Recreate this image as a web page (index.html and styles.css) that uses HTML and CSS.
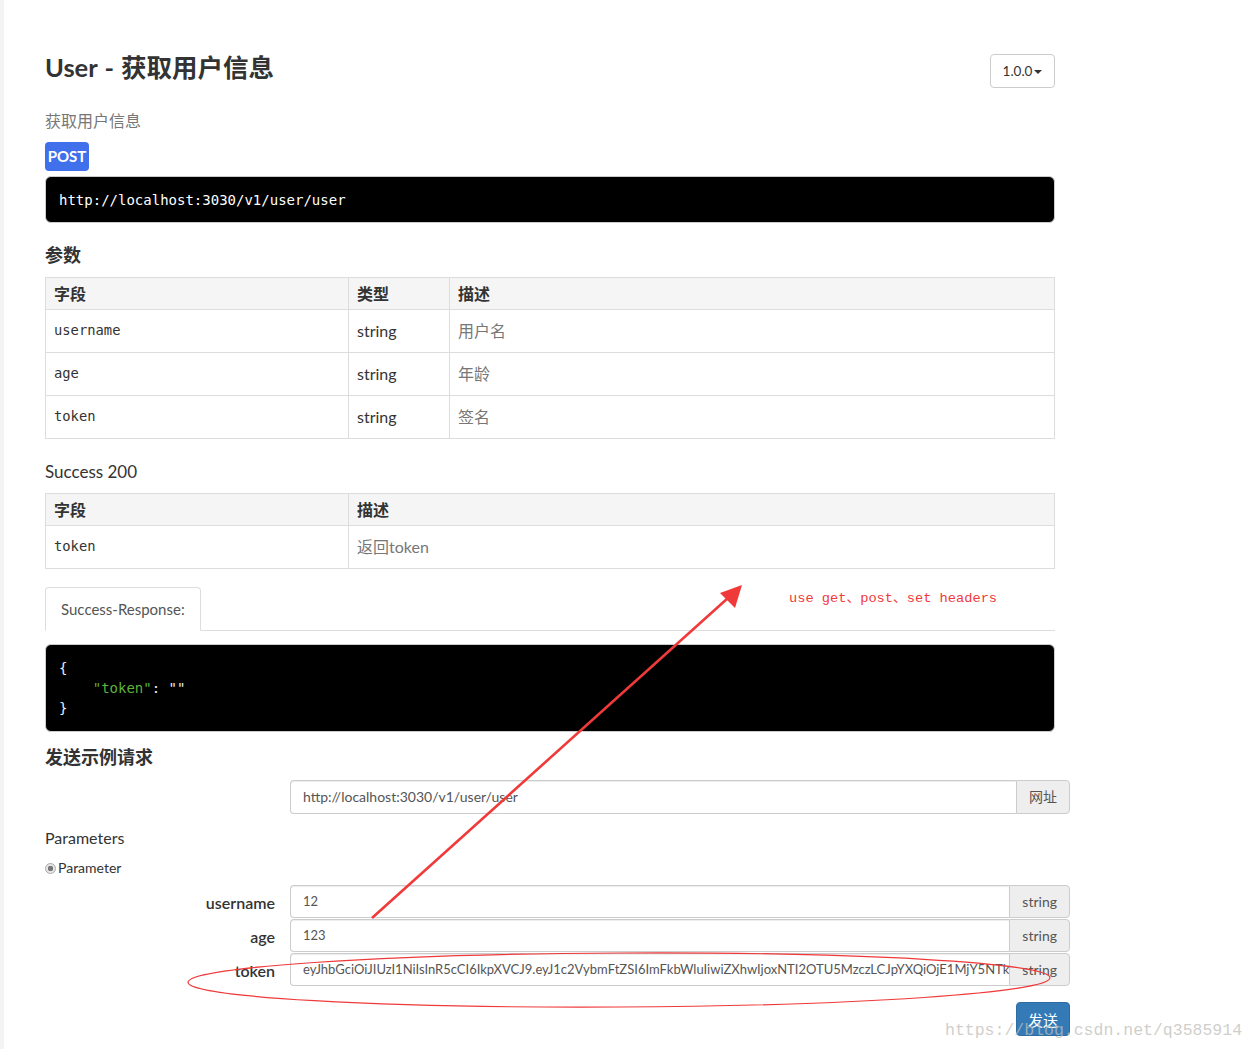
FILE: index.html
```html
<!DOCTYPE html>
<html lang="zh">
<head>
<meta charset="utf-8">
<title>User - 获取用户信息</title>
<link rel="stylesheet" href="styles.css">
</head>
<body>
<div class="app">
  <div class="sidebar-edge"></div>
  <main class="content">
    <div class="header">
      <h1 class="title">User - 获取用户信息</h1>
      <button class="version">1.0.0 <span class="caret"></span></button>
    </div>
    <p class="subtitle">获取用户信息</p>
    <span class="badge-post">POST</span>
    <pre class="url-pre">http://localhost:3030/v1/user/user</pre>

    <h2 class="section-title bold">参数</h2>
    <table class="tbl">
      <colgroup><col class="c1"><col class="c2"><col></colgroup>
      <thead><tr><th>字段</th><th>类型</th><th>描述</th></tr></thead>
      <tbody>
        <tr><td class="code">username</td><td class="type">string</td><td class="desc">用户名</td></tr>
        <tr><td class="code">age</td><td class="type">string</td><td class="desc">年龄</td></tr>
        <tr><td class="code">token</td><td class="type">string</td><td class="desc">签名</td></tr>
      </tbody>
    </table>

    <h2 class="section-title success-title">Success 200</h2>
    <table class="tbl tbl-success">
      <colgroup><col class="c1"><col></colgroup>
      <thead><tr><th>字段</th><th>描述</th></tr></thead>
      <tbody>
        <tr><td class="code">token</td><td class="desc">返回token</td></tr>
      </tbody>
    </table>

    <div class="tabs"><div class="tab">Success-Response:</div></div>
    <pre class="code-pre"><span class="pun">{</span>
    <span class="str">"token"</span><span class="pun">: ""</span>
<span class="pun">}</span></pre>

    <h2 class="section-title bold send-title">发送示例请求</h2>
    <div class="form-row url-row">
      <div class="input-group">
        <div class="field">http://localhost:3030/v1/user/user</div>
        <div class="addon">网址</div>
      </div>
    </div>

    <h3 class="params-title">Parameters</h3>
    <label class="radio-row"><span class="radio"></span>Parameter</label>

    <div class="param-list">
      <div class="form-row">
        <div class="label">username</div>
        <div class="input-group">
          <div class="field small">12</div>
          <div class="addon">string</div>
        </div>
      </div>
      <div class="form-row">
        <div class="label">age</div>
        <div class="input-group">
          <div class="field small">123</div>
          <div class="addon">string</div>
        </div>
      </div>
      <div class="form-row">
        <div class="label">token</div>
        <div class="input-group">
          <div class="field small">eyJhbGciOiJIUzI1NiIsInR5cCI6IkpXVCJ9.eyJ1c2VybmFtZSI6ImFkbWluIiwiZXhwIjoxNTI2OTU5MzczLCJpYXQiOjE1MjY5NTk0MTN9.abc</div>
          <div class="addon">string</div>
        </div>
      </div>
    </div>
    <div class="send-row"><button class="send">发送</button></div>
  </main>
</div>

<div class="note">use get、post、set headers</div>
<div class="watermark">https://blog.csdn.net/q3585914</div>

<svg class="overlay" width="1255" height="1049" viewBox="0 0 1255 1049">
  <line x1="372" y1="918" x2="728" y2="598" stroke="#f03a3a" stroke-width="2.6"/>
  <polygon points="742,585 720,593 735,608" fill="#f03a3a"/>
  <ellipse cx="619" cy="980" rx="431" ry="27" fill="none" stroke="#f03a3a" stroke-width="1.2" transform="rotate(-0.3 619 980)"/>
</svg>
</body>
</html>
```

FILE: styles.css
```css
* { box-sizing: border-box; }

html, body {
  margin: 0;
  padding: 0;
  background: #fff;
  overflow: hidden;
}

body {
  font-family: Lato, "Noto Sans CJK SC", sans-serif;
  color: #333;
  font-size: 16px;
  width: 1255px;
  height: 1049px;
  position: relative;
}

.app {
  display: flex;
  min-height: 1049px;
}

.sidebar-edge {
  width: 4px;
  background: #f4f4f4;
  flex: none;
}

.content {
  padding-left: 41px;
  width: 1070px;
  flex: none;
}

.content > * {
  width: 1010px;
}

.header {
  display: flex;
  justify-content: space-between;
  align-items: flex-start;
  padding-top: 52px;
}

.title {
  margin: 0;
  font-size: 25.5px;
  line-height: 30px;
  font-weight: 700;
  color: #333;
  word-spacing: 1px;
}

.version {
  margin-top: 2px;
  height: 34px;
  width: 65px;
  border: 1px solid #ccc;
  border-radius: 4px;
  background: #fff;
  font-family: Lato, sans-serif;
  font-size: 13.5px;
  color: #333;
  padding: 0;
  display: flex;
  align-items: center;
  justify-content: center;
  gap: 2px;
}

.caret {
  display: inline-block;
  width: 0;
  height: 0;
  border-left: 4px solid transparent;
  border-right: 4px solid transparent;
  border-top: 4px solid #333;
  margin-top: 2px;
}

.subtitle {
  margin: 22px 0 0;
  font-size: 16px;
  line-height: 22px;
  color: #777;
}

.content > .badge-post {
  display: block;
  width: 44px;
  height: 29px;
  margin-top: 10px;
  background: #4070ec;
  color: #fff;
  font-weight: 700;
  font-size: 15px;
  line-height: 29px;
  text-align: center;
  border-radius: 4px;
}

.url-pre {
  margin: 5px 0 0;
  background: #000;
  color: #fff;
  border: 1px solid #ccc;
  border-radius: 6px;
  padding: 13px 13px 12px;
  font-family: "DejaVu Sans Mono", monospace;
  font-size: 14px;
  line-height: 20px;
}

.section-title {
  margin: 20px 0 0;
  font-size: 18px;
  line-height: 24px;
  font-weight: 400;
  color: #333;
}

.section-title.bold { font-weight: 700; }

.success-title {
  font-size: 17px;
  margin-top: 21px;
}

.tbl {
  margin-top: 10px;
  border-collapse: collapse;
  width: 1010px;
  table-layout: fixed;
}

.tbl.tbl-success { margin-top: 9px; }

.tbl col.c1 { width: 303px; }
.tbl col.c2 { width: 101px; }

.tbl th, .tbl td {
  border: 1px solid #ddd;
  text-align: left;
  padding: 10px 8px;
  line-height: 22px;
  vertical-align: middle;
}

.tbl th {
  background: #f5f5f5;
  padding: 5px 8px 4px;
  font-weight: 700;
  font-size: 16px;
}

.tbl td.code {
  font-family: "DejaVu Sans Mono", monospace;
  font-size: 13.8px;
  color: #333;
  padding-top: 9px;
  padding-bottom: 11px;
}

.tbl td.type { font-size: 16px; color: #333; }
.tbl td.desc { font-size: 16px; color: #777; }

.tabs {
  margin-top: 18px;
  display: flex;
  border-bottom: 1px solid #ddd;
}

.tab {
  border: 1px solid #ddd;
  border-bottom-color: #fff;
  border-radius: 4px 4px 0 0;
  margin-bottom: -1px;
  padding: 10px 15px;
  line-height: 22px;
  font-size: 15px;
  color: #555;
  background: #fff;
}

.code-pre {
  margin: 13px 0 0;
  background: #000;
  color: #fff;
  border: 1px solid #ccc;
  border-radius: 6px;
  padding: 13px 13px 13px;
  font-family: "DejaVu Sans Mono", monospace;
  font-size: 14px;
  line-height: 20px;
}

.code-pre .str { color: #5fb23a; }
.code-pre .pun { color: #e8f0ff; }

.send-title { margin-top: 13px; }

.form-row {
  display: flex;
  width: 1025px;
}

.url-row {
  margin-top: 11px;
  padding-left: 245px;
}

.input-group {
  display: flex;
  flex: 1;
  min-width: 0;
  height: 34px;
}

.field {
  flex: 1;
  min-width: 0;
  border: 1px solid #ccc;
  border-right: none;
  border-radius: 4px 0 0 4px;
  padding: 0 12px;
  font-size: 14px;
  line-height: 32px;
  color: #555;
  white-space: nowrap;
  overflow: hidden;
  box-shadow: inset 0 1px 1px rgba(0,0,0,.075);
}

.field.small { font-size: 13px; }

.addon {
  flex: none;
  border: 1px solid #ccc;
  border-radius: 0 4px 4px 0;
  background: #eee;
  padding: 0 12px;
  font-size: 14px;
  line-height: 32px;
  color: #555;
}

.params-title {
  margin: 13px 0 0;
  font-size: 16px;
  line-height: 22px;
  font-weight: 400;
  color: #333;
}

.radio-row {
  display: flex;
  align-items: center;
  margin-top: 9px;
  font-size: 14px;
  line-height: 20px;
  color: #333;
}

.radio {
  width: 11px;
  height: 11px;
  border-radius: 50%;
  border: 1px solid #aaa;
  background: radial-gradient(circle, #777 0 2.5px, #e6e6e6 3px);
  margin-right: 2px;
}

.param-list {
  margin-top: 7px;
  width: 1025px;
}

.param-list .form-row {
  height: 33px;
  margin-bottom: 1px;
}

.param-list .input-group { height: 33px; }
.param-list .field, .param-list .addon { line-height: 31px; }

.label {
  flex: none;
  width: 245px;
  padding-right: 15px;
  text-align: right;
  font-size: 16px;
  line-height: 35px;
  font-weight: 600;
  color: #333;
}

.send-row {
  width: 1025px;
  display: flex;
  justify-content: flex-end;
  margin-top: 16px;
}

.send {
  width: 54px;
  height: 34px;
  background: #337ab7;
  border: 1px solid #2e6da4;
  border-radius: 4px;
  color: #fff;
  font-family: Lato, "Noto Sans CJK SC", sans-serif;
  font-size: 15px;
  padding: 0;
}

.note {
  position: absolute;
  left: 789px;
  top: 590px;
  font-family: "Liberation Mono", "Noto Sans CJK SC", monospace;
  font-size: 13.7px;
  line-height: 18px;
  color: #f03a3a;
  white-space: nowrap;
}

.watermark {
  position: absolute;
  left: 945px;
  top: 1019px;
  font-family: "Liberation Mono", monospace;
  font-size: 16.5px;
  line-height: 24px;
  color: rgba(190, 190, 185, 0.75);
  white-space: nowrap;
}

.overlay {
  position: absolute;
  left: 0;
  top: 0;
  pointer-events: none;
}
```
